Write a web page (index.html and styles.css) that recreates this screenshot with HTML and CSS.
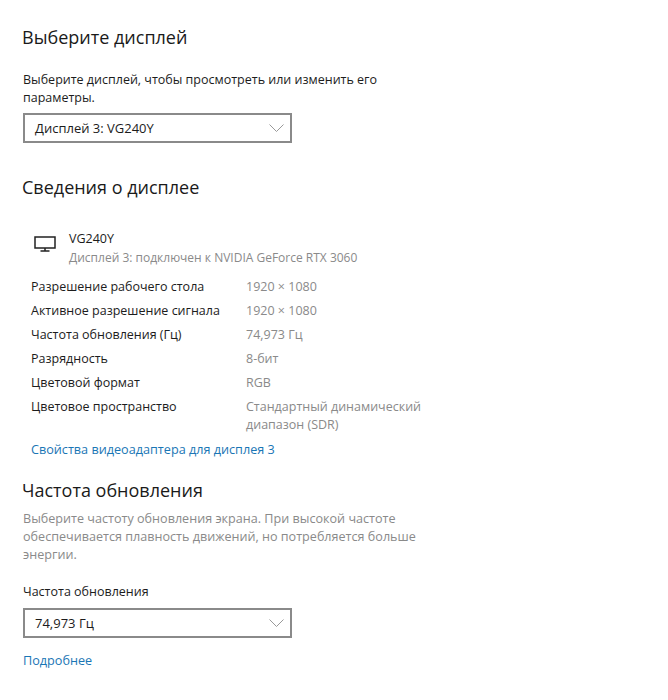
FILE: index.html
```html
<!DOCTYPE html>
<html lang="ru">
<head>
<meta charset="utf-8">
<title>Дисплей</title>
<link rel="stylesheet" href="styles.css">
</head>
<body>
<main class="page">
  <h2 class="heading first">Выберите дисплей</h2>
  <p class="text intro">Выберите дисплей, чтобы просмотреть или изменить его параметры.</p>
  <div class="select">
    <span>Дисплей 3: VG240Y</span>
    <svg class="chevron" width="15" height="8" viewBox="0 0 15 8"><path d="M.5.5l7 7 7-7" fill="none" stroke="#999" stroke-width="1"/></svg>
  </div>
  <h2 class="heading second">Сведения о дисплее</h2>
  <section class="info">
    <div class="monitor">
      <svg class="monitor-icon" width="22" height="16" viewBox="0 0 22 16"><path d="M1 1h20v11H1zM11 12v3M6.500 15h9" fill="none" stroke="#222" stroke-width="1.500"/></svg>
      <div>
        <div class="text name">VG240Y</div>
        <div class="text muted sub">Дисплей 3: подключен к NVIDIA GeForce RTX 3060</div>
      </div>
    </div>
    <dl class="props">
      <dt>Разрешение рабочего стола</dt><dd>1920 × 1080</dd>
      <dt>Активное разрешение сигнала</dt><dd>1920 × 1080</dd>
      <dt>Частота обновления (Гц)</dt><dd>74,973 Гц</dd>
      <dt>Разрядность</dt><dd>8-бит</dd>
      <dt>Цветовой формат</dt><dd>RGB</dd>
      <dt>Цветовое пространство</dt><dd>Стандартный динамический диапазон (SDR)</dd>
    </dl>
    <a class="link" href="#">Свойства видеоадаптера для дисплея 3</a>
  </section>
  <h2 class="heading third">Частота обновления</h2>
  <p class="text muted desc">Выберите частоту обновления экрана. При высокой частоте обеспечивается плавность движений, но потребляется больше энергии.</p>
  <div class="text label">Частота обновления</div>
  <div class="select">
    <span>74,973 Гц</span>
    <svg class="chevron" width="15" height="8" viewBox="0 0 15 8"><path d="M.5.5l7 7 7-7" fill="none" stroke="#999" stroke-width="1"/></svg>
  </div>
  <a class="link more" href="#">Подробнее</a>
</main>
</body>
</html>
```
FILE: styles.css
```css
* { box-sizing: border-box; }
html, body { margin: 0; background: #fff; }
body { width: 668px; height: 700px; overflow: hidden; font-family: "Open Sans", "Noto Sans", sans-serif; color: #1c1c1c; }
.page { padding: 25px 0 0 23px; }
.heading { margin: 0; font-weight: 400; font-size: 18px; line-height: 24px; color: #1a1a1a; margin-left: -1px; }
.second { margin-top: 32px; }
.third { margin-top: 20px; }
.text { font-size: 12.500px; line-height: 18px; }
.intro { margin: 22px 0 0; width: 400px; }
.select { margin-top: 6px; width: 269px; height: 30px; border: 2px solid #8a8a8a; display: flex; align-items: center; justify-content: space-between; padding: 0 6px 0 10px; font-size: 13px; }
.chevron { display: block; }
.info { padding-left: 8px; }
.monitor { display: flex; margin-top: 30px; }
.monitor-icon { margin: 7px 13px 0 3px; flex: none; }
.name { line-height: 19px; }
.sub { font-size: 12px; line-height: 20px; }
.muted { color: #8a8a8a; }
.props { margin: 10px 0 0; display: grid; grid-template-columns: 215px 180px; grid-auto-rows: auto; row-gap: 6px; font-size: 12.500px; line-height: 18px; }
.props dt { margin: 0; }
.props dd { margin: 0; color: #8a8a8a; }
.link { display: block; color: #1a76b5; text-decoration: none; font-size: 12.650px; line-height: 18px; }
.info .link { margin-top: 6px; }
.desc { margin: 8px 0 0; width: 400px; font-size: 12.600px; }
.label { margin-top: 19px; }
.label + .select { margin-top: 7px; }
.more { margin-top: 13px; }
```
